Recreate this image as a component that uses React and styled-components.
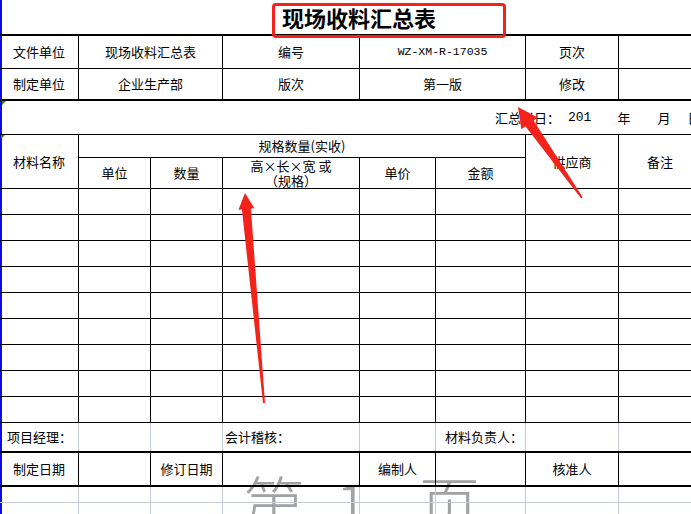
import React from 'react'
import styled, { createGlobalStyle } from 'styled-components'

const GlobalStyle = createGlobalStyle`
  html, body {
    margin: 0;
    padding: 0;
    background: #fff;
  }
  body {
    font-family: "Noto Sans CJK SC", "Liberation Sans", sans-serif;
    color: #000;
    overflow: hidden;
  }
`

const COLS = '79px 72px 72px 137px 76px 90px 93px 83px'
const GRID = '#c5cbdd'

const Page = styled.div`
    position: relative;
    width: 691px;
    height: 514px;
    overflow: hidden;
    background: #fff;
    box-shadow: inset 2px 0 0 #0b0be8;
`

const Sheet = styled.div`
    position: relative;
    z-index: 1;
    width: 702px;
    display: flex;
    flex-direction: column;
`

const Title = styled.div`
    height: 36px;
    box-sizing: border-box;
    border-bottom: 2px solid #000;
    display: flex;
    align-items: center;
    padding-left: 282px;
    font-size: 22px;
    font-weight: 700;
`

const Row = styled.div`
    display: grid;
    grid-template-columns: ${COLS};
    height: ${p => p.$h}px;
    box-sizing: border-box;
    border-bottom: ${p => (p.$thick ? 2 : 1)}px solid ${p => p.$line || '#000'};
`

const HeaderGrid = styled.div`
    display: grid;
    grid-template-columns: ${COLS};
    grid-template-rows: 23px 31px;
`

const Cell = styled.div`
    position: relative;
    grid-column: ${p => p.$col || `span ${p.$span || 1}`};
    grid-row: ${p => p.$row || 'auto'};
    display: flex;
    align-items: center;
    justify-content: ${p => (p.$left ? 'flex-start' : 'center')};
    padding-left: ${p => p.$pad || 0}px;
    box-sizing: border-box;
    min-width: 0;
    border-right: 1px solid ${p => p.$line || '#000'};
    border-bottom: ${p => (p.$bb ? '1px solid #000' : 'none')};
    font-size: 13px;
    line-height: ${p => p.$lh || 14}px;
    white-space: nowrap;
    text-align: center;

    ${p => p.$flag && `
      &::before {
        content: '';
        position: absolute;
        left: 1px;
        top: 0;
        border-top: 4px solid #1c8c24;
        border-right: 4px solid transparent;
      }
    `}
`

const Code = styled.span`
    font-family: "Liberation Mono", "DejaVu Sans Mono", monospace;
    font-size: 11.5px;
`

const DateRow = styled.div`
    position: relative;
    height: 34px;
    box-sizing: border-box;
    border-bottom: 1px solid #000;
    display: flex;
    align-items: center;
    padding-left: 495px;
    font-size: 13px;
    white-space: nowrap;

    &::before {
        content: '';
        position: absolute;
        left: 2px;
        top: 0;
        border-top: 4px solid #1c8c24;
        border-right: 4px solid transparent;
    }
`

const Digits = styled.span`
    font-family: "Liberation Mono", "DejaVu Sans Mono", monospace;
    font-size: 13px;
    margin-left: 8px;
`

const Unit = styled.span`
    margin-left: ${p => p.$gap}px;
`

const Mark = styled.div`
    position: absolute;
    left: 272px;
    top: 3px;
    width: 234px;
    height: 35px;
    box-sizing: border-box;
    border: 3px solid #f3221b;
    border-radius: 4px;
    z-index: 2;
`

const Watermark = styled.div`
    position: absolute;
    left: 243px;
    top: 471px;
    z-index: 0;
    display: flex;
    align-items: flex-start;
    font-size: 62px;
    line-height: 1;
    font-weight: 300;
    color: #a2a2a2;
`

const Glyph = styled.span`
    margin-left: ${p => p.$gap || 0}px;
`

const Arrows = styled.svg`
    position: absolute;
    left: 0;
    top: 0;
    z-index: 3;
    pointer-events: none;
`

function DataRow() {
    return (
        <Row $h={26}>
            {Array.from({ length: 8 }).map((_, i) => (
                <Cell key={i} />
            ))}
        </Row>
    )
}

function BlankRow() {
    return (
        <Row $h={16} $line={GRID}>
            {Array.from({ length: 8 }).map((_, i) => (
                <Cell key={i} $line={GRID} />
            ))}
        </Row>
    )
}

export default function App() {
    const rows = Array.from({ length: 9 })

    return (
        <Page>
            <GlobalStyle />
            <Watermark>
                <Glyph>第</Glyph>
                <Glyph $gap={30}>1</Glyph>
                <Glyph $gap={50}>页</Glyph>
            </Watermark>

            <Sheet>
                <Title>现场收料汇总表</Title>

                <Row $h={33}>
                    <Cell>文件单位</Cell>
                    <Cell $span={2}>现场收料汇总表</Cell>
                    <Cell>编号</Cell>
                    <Cell $span={2}><Code>WZ-XM-R-17035</Code></Cell>
                    <Cell>页次</Cell>
                    <Cell />
                </Row>
                <Row $h={32} $thick>
                    <Cell>制定单位</Cell>
                    <Cell $span={2}>企业生产部</Cell>
                    <Cell>版次</Cell>
                    <Cell $span={2}>第一版</Cell>
                    <Cell>修改</Cell>
                    <Cell />
                </Row>

                <DateRow>
                    汇总当日：<Digits>201</Digits>
                    <Unit $gap={26}>年</Unit>
                    <Unit $gap={27}>月</Unit>
                    <Unit $gap={17}>日</Unit>
                </DateRow>

                <HeaderGrid>
                    <Cell $col="1" $row="1 / span 2" $bb $flag>材料名称</Cell>
                    <Cell $col="2 / span 5" $row="1" $bb>规格数量(实收)</Cell>
                    <Cell $col="7" $row="1 / span 2" $bb>供应商</Cell>
                    <Cell $col="8" $row="1 / span 2" $bb>备注</Cell>
                    <Cell $col="2" $row="2" $bb>单位</Cell>
                    <Cell $col="3" $row="2" $bb>数量</Cell>
                    <Cell $col="4" $row="2" $bb $lh={15}>高×长×宽 或<br />（规格）</Cell>
                    <Cell $col="5" $row="2" $bb>单价</Cell>
                    <Cell $col="6" $row="2" $bb>金额</Cell>
                </HeaderGrid>

                {rows.map((_, i) => (
                    <DataRow key={i} />
                ))}

                <Row $h={30} $thick>
                    <Cell $line={GRID} $left $pad={7}>项目经理：</Cell>
                    <Cell $line={GRID} />
                    <Cell $line={GRID} />
                    <Cell $line={GRID} $left $pad={2}>会计稽核：</Cell>
                    <Cell $line={GRID} />
                    <Cell $line={GRID} $left $pad={9}>材料负责人：</Cell>
                    <Cell $line={GRID} />
                    <Cell $line={GRID} />
                </Row>
                <Row $h={34} $thick>
                    <Cell>制定日期</Cell>
                    <Cell />
                    <Cell>修订日期</Cell>
                    <Cell />
                    <Cell>编制人</Cell>
                    <Cell />
                    <Cell>核准人</Cell>
                    <Cell />
                </Row>

                <BlankRow />
                <BlankRow />
            </Sheet>

            <Mark />

            <Arrows width="691" height="514" viewBox="0 0 691 514">
                <polygon
                    fill="#f3221b"
                    points="245,193 254.4,208.3 250.9,208.6 265,403 263,403 241.9,209.4 238.5,209.7"
                />
                <polygon
                    fill="#f3221b"
                    points="518,107 537.7,117.6 533.6,120.5 582.8,197.4 581.2,198.6 525.4,126.3 521.3,129.2"
                />
            </Arrows>
        </Page>
    )
}
